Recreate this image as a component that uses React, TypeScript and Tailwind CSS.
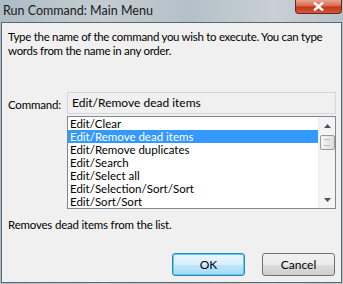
import React from "react";

const items = [
  "Edit/Clear",
  "Edit/Remove dead items",
  "Edit/Remove duplicates",
  "Edit/Search",
  "Edit/Select all",
  "Edit/Selection/Sort/Sort",
  "Edit/Sort/Sort",
];

export default function App() {
  return (
    <div
      className="w-[343px] h-[284px] overflow-hidden flex flex-col bg-[linear-gradient(90deg,#aebcc6_0%,#c4ccd2_30%,#b4c0c8_55%,#c8d0d6_80%,#b8c2ca_100%)] text-[12px] text-black"
      style={{ fontFamily: 'Lato, "Segoe UI", sans-serif' }}
    >
      {/* Title bar */}
      <div className="h-[22px] flex items-start relative shrink-0">
        <div className="pl-[3px] pt-[3px] text-[12.5px] leading-[16px] text-[#1a1a1a]">Run Command: Main Menu</div>
        <div className="absolute right-[1px] top-0 w-[47px] h-[14px] rounded-b-[4px] border border-t-0 border-[#6b2418] bg-[linear-gradient(180deg,#e9a593_0%,#d8684c_45%,#c2361a_55%,#d45a3a_100%)] flex items-center justify-center">
          <svg width="11" height="9" viewBox="0 0 11 9">
            <path d="M1 0.5 L10 8.5 M10 0.5 L1 8.5" stroke="#ffffff" strokeWidth="2.4" />
          </svg>
        </div>
      </div>
      {/* Client */}
      <div className="flex-1 mx-[1px] mb-[1px] border border-[#5a6670] p-[1px] bg-[#f0f0f0] min-h-0">
        <div className="h-full bg-[#f0f0f0] flex flex-col pl-[5px] pr-[4px]">
          <p className="mt-[6px] leading-[14px] text-[11.5px] tracking-[-0.3px] whitespace-nowrap">
            Type the name of the command you wish to execute. You can type
            <br />
            words from the name in any order.
          </p>
          <div className="mt-[34px] flex items-start">
            <div className="w-[59px] pt-[6px] leading-[14px] text-[11.5px] tracking-[-0.2px] whitespace-nowrap">Command:</div>
            <div className="flex-1 flex flex-col">
              <div className="h-[22px] border border-[#d3d6da] bg-[#f0f0f0] pl-[4px] leading-[19px] text-[12px]">Edit/Remove dead items</div>
              <div className="mt-[2px] h-[93px] border border-[#828790] bg-white flex">
                <div className="flex-1 flex flex-col overflow-hidden">
                  {items.map((it, i) => (
                    <div
                      key={it}
                      className={
                        i === 1
                          ? "h-[13px] leading-[13px] pl-[2px] text-[11.5px] whitespace-nowrap overflow-hidden bg-[#3399ff] text-white"
                          : "h-[13px] leading-[13px] pl-[2px] text-[11.5px] whitespace-nowrap overflow-hidden"
                      }
                    >
                      {it}
                    </div>
                  ))}
                </div>
                <div className="w-[17px] bg-[#f4f4f4] border-l border-[#ececec] flex flex-col items-center relative">
                  <div className="h-[18px] flex items-center justify-center">
                    <svg width="7" height="4" viewBox="0 0 7 4">
                      <path d="M0 4 L3.5 0 L7 4 Z" fill="#505050" />
                    </svg>
                  </div>
                  <div className="w-[15px] h-[15px] rounded-[2px] border border-[#9a9a9a] bg-[linear-gradient(90deg,#f6f6f6,#dcdcdc)] flex items-center justify-center">
                    <div className="w-[6px] h-[7px] border-y border-[#bdbdbd]" />
                  </div>
                  <div className="flex-1" />
                  <div className="h-[17px] flex items-center justify-center">
                    <svg width="7" height="4" viewBox="0 0 7 4">
                      <path d="M0 0 L3.5 4 L7 0 Z" fill="#505050" />
                    </svg>
                  </div>
                </div>
              </div>
            </div>
          </div>
          <p className="mt-[9px] leading-[14px] text-[11.5px] tracking-[-0.2px]">Removes dead items from the list.</p>
          <div className="mt-[21px] flex justify-end gap-[17px] pr-[1px]">
            <button className="w-[73px] h-[23px] rounded-[3px] border border-[#3c7fb1] bg-[linear-gradient(180deg,#eaf6fd_0%,#d9f0fc_50%,#bee6fd_51%,#a7d9f5_100%)] shadow-[inset_0_0_0_1px_#48d4fe] text-[12px]">
              OK
            </button>
            <button className="w-[73px] h-[23px] rounded-[3px] border border-[#707070] bg-[linear-gradient(180deg,#f2f2f2_0%,#ebebeb_50%,#dddddd_51%,#cfcfcf_100%)] text-[12px]">
              Cancel
            </button>
          </div>
        </div>
      </div>
    </div>
  );
}
